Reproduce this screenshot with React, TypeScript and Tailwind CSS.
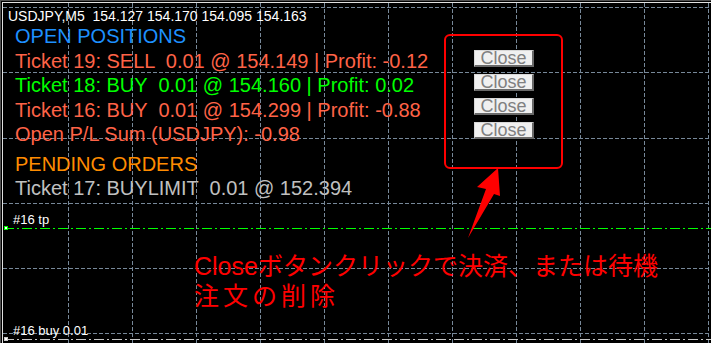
import React from 'react';

type Row = { text: string; color: string; gap?: boolean };

const rows: Row[] = [
  { text: 'OPEN POSITIONS', color: 'text-[#1e90ff]' },
  { text: 'Ticket 19: SELL  0.01 @ 154.149 | Profit: -0.12', color: 'text-[#ff6347]' },
  { text: 'Ticket 18: BUY  0.01 @ 154.160 | Profit: 0.02', color: 'text-[#00ff00]' },
  { text: 'Ticket 16: BUY  0.01 @ 154.299 | Profit: -0.88', color: 'text-[#ff6347]' },
  { text: 'Open P/L Sum (USDJPY): -0.98', color: 'text-[#ff6347]' },
  { text: 'PENDING ORDERS', color: 'text-[#ff8c00]', gap: true },
  { text: 'Ticket 17: BUYLIMIT  0.01 @ 152.394', color: 'text-[#c0c0c0]' },
];

const vLines = Array.from({ length: 11 }, (_, i) => 68.5 + i * 64);
const hLines = [7.5, 72.5, 138.5, 203.5, 268.5, 333.5];

function ChartGrid() {
  return (
    <svg className="absolute inset-0" width={711} height={343} viewBox="0 0 711 343">
      {vLines.map((x) => (
        <line key={`v${x}`} x1={x} y1={3} x2={x} y2={343} stroke="#778899" strokeDasharray="4 2" />
      ))}
      {hLines.map((y) => (
        <line key={`h${y}`} x1={3} y1={y} x2={711} y2={y} stroke="#778899" strokeDasharray="4 2" />
      ))}
      {/* take profit line */}
      <line x1={4} y1={228.5} x2={711} y2={228.5} stroke="#00ff00" strokeDasharray="10 3 2 3" />
      <rect x={4.5} y={226.5} width={3} height={3} fill="#ffffff" stroke="#00ff00" />
      {/* buy order line */}
      <line x1={4} y1={339.5} x2={711} y2={339.5} stroke="#c8c8c8" strokeDasharray="10 3 2 3" />
      <rect x={4.5} y={337.5} width={3} height={3} fill="#ffffff" stroke="#c8c8c8" />
      {/* callout arrow */}
      <polygon points="498,168 477,187 486,189 468,238 494,194 500,196" fill="#ff0000" />
    </svg>
  );
}

function CloseButton() {
  return (
    <button className="w-[60px] h-[17px] flex items-center justify-center bg-[#f0f0f0] border-t border-l border-[#d8d8d8] border-b-2 border-r-2 border-b-[#696969] border-r-[#696969] text-[18px] leading-none text-[#808080]">
      Close
    </button>
  );
}

export default function App() {
  return (
    <div className="relative w-[711px] h-[343px] overflow-hidden bg-black font-['Liberation_Sans',Arial,sans-serif] shadow-[inset_1px_1px_0_#505050,inset_2px_2px_0_#000000,inset_3px_3px_0_#e0e0e0]">
      <ChartGrid />

      <div className="relative pl-[8px] pt-[8px]">
        <div className="text-[14px] leading-[16px] text-white whitespace-pre">
          USDJPY,M5  154.127 154.170 154.095 154.163
        </div>
        <div className="flex pl-[7px]">
          <div className="w-[459px] text-[20px] leading-[24.5px] whitespace-pre">
            {rows.map((r) => (
              <div key={r.text} className={`${r.color} ${r.gap ? 'mt-[5px]' : ''}`}>
                {r.text}
              </div>
            ))}
          </div>
          <div className="flex flex-col gap-[7px] pt-[26px]">
            <CloseButton />
            <CloseButton />
            <CloseButton />
            <CloseButton />
          </div>
        </div>
      </div>

      {/* order labels on the chart */}
      <div className="absolute left-[13px] top-[212px] text-[13px] leading-[15px] text-white whitespace-pre">#16 tp</div>
      <div className="absolute left-[13px] top-[323px] text-[13px] leading-[15px] text-white whitespace-pre">#16 buy 0.01</div>

      {/* annotation */}
      <div className="absolute left-[444px] top-[34px] w-[119px] h-[135px] border-2 border-[#ff0000] rounded-[6px]" />
      <div className="absolute left-[194px] top-[251px] text-[25px] leading-[30px] text-[#ff0000] font-['Liberation_Sans','Noto_Sans_CJK_JP',sans-serif] whitespace-pre">
        <div>Closeボタンクリックで決済、または待機</div>
        <div className="tracking-[4px]">注文の削除</div>
      </div>
    </div>
  );
}
